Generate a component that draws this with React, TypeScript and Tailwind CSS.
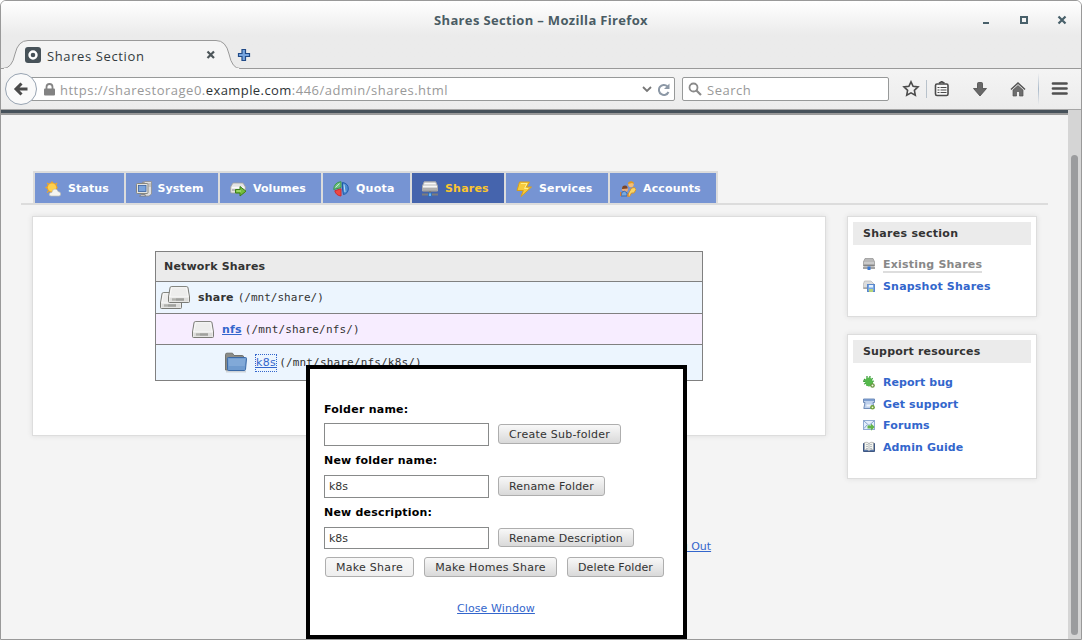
import React from "react";

type SvgProps = { children: React.ReactNode; w: number; h: number; className?: string };
const Svg = ({ children, w, h, className = "" }: SvgProps) => (
  <svg width={w} height={h} viewBox={`0 0 ${w} ${h}`} fill="none" className={"shrink-0 " + className}>
    {children}
  </svg>
);

const StatusIcon = () => (
  <Svg w={16} h={16}>
    <g stroke="#f6a81c" strokeWidth="1.4">
      <path d="M7 0.5V13M0.5 6.5H13M2.2 2L12 11.5M12 2L2.2 11.5" strokeDasharray="2 1" />
    </g>
    <circle cx="7" cy="6.5" r="4.6" fill="#fdd04e" stroke="#f3a31d" />
    <path d="M6 15Q4 15 4.200 13Q5 11.200 6.800 11.500Q7.500 8 10 8Q12.600 8 13 10.500Q15.600 10.500 15.700 13Q15.600 15 14 15Z" fill="#f4f4f0" stroke="#bdbdb2" strokeWidth=".7" />
  </Svg>
);
const SystemIcon = () => (
  <Svg w={16} h={16}>
    <path d="M6 1.500L9 .5H15.500V13L13 15H9V2Z" fill="#dedede" stroke="#8d8d8d" strokeWidth=".8" />
    <path d="M11 3H15M12.500 5H15" stroke="#999" strokeWidth=".8" />
    <rect x=".5" y="2.500" width="11.500" height="10" rx="1" fill="#e4e4e0" stroke="#87877f" />
    <rect x="2.500" y="4.500" width="7.500" height="6" fill="#79a3dc" stroke="#3b62a0" strokeWidth=".8" />
    <path d="M3.500 15Q5 12.800 8.500 13.500L9.500 15Z" fill="#eee" stroke="#777" strokeWidth=".8" />
  </Svg>
);
const VolumesIcon = () => (
  <Svg w={17} h={16}>
    <path d="M3 2H13L15.500 6V11Q15.500 12 14.500 12H1.600Q.6 12 .6 11V6Z" fill="#e3e3e3" stroke="#a0a0a0" strokeWidth=".8" />
    <path d="M2 6.500H14" stroke="#fafafa" strokeWidth="1.500" /><path d="M2 9H9" stroke="#8f8f8f" />
    <path d="M5.500 8.500H10V5.500L16 10.200L10 15V12H5.500Z" fill="#74bd3d" stroke="#397d19" />
    <path d="M6.500 10H11" stroke="#bce98a" />
  </Svg>
);
const QuotaIcon = () => (
  <Svg w={16} h={16}>
    <path d="M8 .7Q1 1.500 .7 8.500L8 6.500Z" fill="#74c47a" stroke="#3a9650" />
    <path d="M1.800 9.800L8 7.800V15Q3 14.500 1.800 9.800Z" fill="#ed4843" stroke="#d12b2e" />
    <path d="M9.500 1.500Q15.500 2.500 15.300 8Q15 12.500 10.500 13.500L9.500 8Z" fill="#4f8bd4" stroke="#1f5ba8" />
    <path d="M2.500 6.500L6.500 2.500M11 3.500L12 11" stroke="#bce1ed" />
  </Svg>
);
const SharesIcon = () => (
  <Svg w={16} h={16}>
    <path d="M2.200 .8H13.700L15.500 5V10H.5V5Z" fill="#d8d8d8" stroke="#aaa" />
    <path d="M2.500 2.500H13.500M1 5.500H15" stroke="#f7f7f7" />
    <path d="M1 8H15M1 10H15" stroke="#858585" />
    <path d="M8 10V14M0 13.500H16" stroke="#7c7c7c" strokeWidth="2" />
    <rect x="6.500" y="12" width="3" height="3.500" fill="#64b2ff" stroke="#2e69ae" strokeWidth=".8" />
  </Svg>
);
const ServicesIcon = () => (
  <Svg w={16} h={16}>
    <path d="M3.500 1H13.500L10.500 6H15.500L5 15.500L7.300 9.500H1Z" fill="#f6cb3d" stroke="#d99f19" />
    <path d="M5 2.500H11L8.500 7.500H12" stroke="#fff08a" />
  </Svg>
);
const AccountsIcon = () => (
  <Svg w={16} h={16}>
    <circle cx="11" cy="3.500" r="2.700" fill="#f4bd76" />
    <path d="M8 3Q8 .2 11 .2Q14 .2 14 3L12 2Z" fill="#e09a1e" />
    <path d="M7 15L11.500 7L14.500 6.500L16 8.500L14 12L11.500 12L9.500 15.500Z" fill="#f9d566" stroke="#d39430" />
    <circle cx="5" cy="8" r="3" fill="#e8a978" />
    <path d="M2 8Q2 4.600 5 4.600Q8 5 7.500 7.500Z" fill="#794428" />
    <path d="M1 15L2 11Q5 9 7 12V15Z" fill="#78a9df" stroke="#376bb0" />
    <path d="M.6 11V15M7 14H9" stroke="#de8239" strokeWidth="1.300" />
  </Svg>
);

const Drive = () => (
  <>
    <path d="M3.300 .6H18.700Q19.800 .6 20 1.800L21.500 11V15.500Q21.500 16.500 20.500 16.500H1.500Q.5 16.500 .5 15.500V11L2 1.800Q2.200 .6 3.300 .6Z" fill="#e9e9e7" stroke="#7a7b76" />
    <path d="M3.500 1.700H18.500L20.300 11H1.700Z" fill="#ededec" stroke="#fff" strokeWidth=".7" />
    <rect x="2" y="11.800" width="18" height="3.400" fill="#dcdcda" />
    <path d="M4 13.500H16" stroke="#b0b1ad" strokeWidth="2.400" />
    <path d="M8.500 13.500H16" stroke="#8f908c" strokeWidth="2.400" strokeDasharray="1 1" />
  </>
);
const DriveIcon = () => <Svg w={22} h={17}><Drive /></Svg>;
const DrivesIcon = () => (
  <Svg w={30} h={23}>
    <g transform="translate(0 6)"><Drive /></g>
    <g transform="translate(8 0)"><Drive /></g>
  </Svg>
);
const FolderIcon = () => (
  <Svg w={24} h={22}>
    <path d="M2 19.500H22" stroke="#aaa" strokeWidth="2" opacity=".45" />
    <path d="M1.500 18V2.500Q1.500 1.200 3 1.200H8.500L10 3.500H18.500Q19.500 3.500 19.500 5V18Z" fill="#8b8c88" stroke="#72736f" />
    <path d="M3.300 6.500Q3.300 5.500 4.500 5.500H21.500Q22.600 5.500 22.500 6.700L21.500 17.500Q21.300 18.500 20.300 18.500H4.500Q3.600 18.500 3.600 17.500Z" fill="#6f9bcf" stroke="#3a69a6" />
    <path d="M4.500 6.700H21.500L20.700 14H4.700Z" fill="#8db3de" opacity=".6" />
  </Svg>
);

const SmallShare = () => (
  <Svg w={12} h={12}>
    <path d="M2 .5H10L11.600 4V8H.4V4Z" fill="#b9b9b9" stroke="#999" strokeWidth=".8" />
    <path d="M1 5H11" stroke="#ddd" /><path d="M.5 7.500H11.500M0 10H12" stroke="#858585" strokeWidth="1.500" />
    <rect x="4.500" y="8.500" width="3" height="3.500" fill="#3b78d1" />
  </Svg>
);
const SmallSnapshot = () => (
  <Svg w={12} h={12}>
    <path d="M1.500 1H8L11 4V8.500H.4V4Z" fill="#ddd" stroke="#bbb" strokeWidth=".8" /><path d="M.5 8H6" stroke="#888" />
    <rect x="4.500" y="4.500" width="7" height="7" fill="#76a5e4" stroke="#5b88cb" />
    <path d="M6 5H10V7.500H6Z" fill="#e5f2ff" /><path d="M6 9H10V12H6Z" fill="#b7d47a" />
  </Svg>
);
const BugIcon = () => (
  <Svg w={12} h={12}>
    <path d="M4 0V10M7 0L6 9M9.500 2L5 10M0 5L10 7M1 3L9 10M1 8L11 5" stroke="#3c9e3b" strokeWidth="1.300" />
    <ellipse cx="6" cy="6" rx="3.800" ry="4.400" transform="rotate(-25 6 6)" fill="#55b94c" />
    <circle cx="9.500" cy="9.500" r="2.300" fill="#68943f" /><circle cx="9.500" cy="9.500" r="1" fill="#f2f9e9" />
  </Svg>
);
const SupportIcon = () => (
  <Svg w={12} h={12}>
    <path d="M.5 1H11.500V4.500H10L11 10.500H.8L2 4.500H.5Z" fill="#bfd1ec" stroke="#6583b2" strokeWidth=".9" />
    <path d="M1 2H11" stroke="#6f91c9" strokeWidth="1.600" /><path d="M3.500 7.500H8" stroke="#eef4fd" strokeWidth="2" />
    <circle cx="9.500" cy="9.300" r="2.300" fill="#6fa136" /><circle cx="9.500" cy="9.300" r=".9" fill="#eef9df" />
  </Svg>
);
const ForumIcon = () => (
  <Svg w={12} h={12}>
    <rect x=".5" y="1.500" width="11" height="9" fill="#e3eefb" stroke="#91acd3" />
    <path d="M1 2L6 6.500L11 2M1 9.500L4 6" stroke="#87a4cd" />
    <path d="M4.500 6.500H8V4.500L11.700 8L8 11.800V9.500H4.500Z" fill="#62b54a" />
  </Svg>
);
const GuideIcon = () => (
  <Svg w={12} h={12}>
    <path d="M.5 2.500V10.500H11.500V2.500Z" fill="#4770b1" stroke="#3f5680" />
    <path d="M1.500 1.500Q4.500 .5 6 2.500Q7.500 .5 10.500 1.500V9Q7.500 8 6 10Q4.500 8 1.500 9Z" fill="#f4f4ed" stroke="#999" strokeWidth=".6" />
    <path d="M6 2.500V10M3 3.500H5M7 3.500H9M3 5.500H5M7 5.500H9M3 7.500H5M7 7.500H9" stroke="#a9b1b8" strokeWidth=".8" />
  </Svg>
);

type TabProps = { icon: React.ReactNode; label: string; width: string; active?: boolean };
const Tab = ({ icon, label, width, active }: TabProps) => (
  <div className={`flex h-[30px] items-center pl-[10px] text-[11px] font-bold ${width} ${active ? "bg-[#4564ad] text-[#fcc62c]" : "bg-[#7694d3] text-white"}`}>
    <span className="mt-[2px] flex w-[23px]">{icon}</span><span className="pt-[2px]">{label}</span>
  </div>
);

const Push = ({ children, className }: { children: React.ReactNode; className: string }) => (
  <button className={`rounded-[3px] border border-[#aeaeae] bg-linear-to-b from-[#f8f8f8] pt-px text-[11px] leading-[17px] text-[#333] ${className}`}>{children}</button>
);
const Field = ({ value, className }: { value: string; className: string }) => (
  <input defaultValue={value} className={`w-[165px] border border-[#888a8a] bg-white px-1 text-[11px] text-[#333] outline-none ${className}`} />
);

const SideLink = ({ icon, label, spacing, current }: { icon: React.ReactNode; label: string; spacing: string; current?: boolean }) => (
  <div className="flex h-[21.700px] items-start gap-2 pl-[10px]">
    <span className="mt-[5px]">{icon}</span>
    <a className={`mt-[3px] h-[17px] border-b-2 text-[11px] leading-[17px] font-bold ${spacing} ${current ? "border-[#ddd] text-[#888]" : "border-transparent text-[#3366cc]"}`}>{label}</a>
  </div>
);

const Toolbar = () => (
  <div className="relative flex h-[41px] shrink-0 items-start border-b border-[#a5a5a5] bg-linear-to-b from-[#f4f4f4] to-[#ececec]">
    <div className="mt-2 ml-[21px] flex h-6 w-[653px] items-center rounded-[2px] border border-[#979999] bg-white pl-[21px]">
      <Svg w={11} h={13}>
        <path d="M2.500 6V4Q2.500 1 5.500 1Q8.500 1 8.500 4V6" stroke="#848484" strokeWidth="1.800" />
        <rect x="0" y="5.500" width="11" height="7" rx="1" fill="#828282" />
      </Svg>
      <span className="ml-[5px] whitespace-pre pt-[3px] font-['Open_Sans',sans-serif] text-[13px] tracking-[0.5px] text-[#999]">https://sharestorage0.<span className="tracking-[0.42px] text-[#2e3436]">example.com</span>:446/admin/shares.html</span>
      <Svg w={12} h={8} className="ml-auto"><path d="M2 2L6 6L10 2" stroke="#777" strokeWidth="1.800" /></Svg>
      <Svg w={13} h={13} className="mr-[3px] ml-[5px]"><path d="M10.500 9A5 5 0 1 1 9.300 3.200" stroke="#8c98a6" strokeWidth="2" /><path d="M11.500 .5V6H6Z" fill="#8c98a6" /></Svg>
    </div>
    <div className="mt-2 ml-[7px] flex h-6 w-[207px] items-center rounded-[2px] border border-[#979999] bg-white pl-[5px]">
      <Svg w={15} h={15}><circle cx="5.500" cy="5.500" r="4" stroke="#8a8a8a" strokeWidth="1.800" /><path d="M8.500 8.500L13 13" stroke="#8a8a8a" strokeWidth="2.200" /></Svg>
      <span className="ml-[4px] pt-[3px] font-['Open_Sans',sans-serif] text-[13px] tracking-[0.5px] text-[#999]">Search</span>
    </div>
    <Svg w={18} h={18} className="mt-[11px] ml-[13px]"><path d="M9 1.800L11.100 6.300L16 6.900L12.400 10.300L13.300 15.300L9 12.900L4.700 15.300L5.600 10.300L2 6.900L6.900 6.300Z" stroke="#4b4b4b" strokeWidth="1.600" /></Svg>
    <div className="mt-[11px] ml-[6px] h-[18px] w-px bg-[#b8c2cb]" />
    <Svg w={15} h={16} className="mt-[12px] ml-[7px]">
      <rect x="1.500" y="3" width="12.500" height="11.500" rx="1.500" fill="#fafafa" stroke="#4b4b4b" strokeWidth="1.600" />
      <path d="M5 2.200L7.750 .8L10.500 2.200" stroke="#4b4b4b" strokeWidth="1.800" />
      <path d="M3.500 6.500H5.500M6.500 6.500H12.500M3.500 9H5.500M6.500 9H12.500M3.500 11.500H5.500M6.500 11.500H12.500" stroke="#4b4b4b" strokeWidth="1.200" />
    </Svg>
    <Svg w={14} h={15} className="mt-[13px] ml-[24px]"><path d="M4.500 1.500Q4.500 .5 5.500 .5H8.500Q9.500 .5 9.500 1.500V6.500H13.500L7 14L.5 6.500H4.500Z" fill="#686868" stroke="#4a4a4a" strokeWidth=".8" /></Svg>
    <Svg w={16} h={16} className="mt-[12px] ml-[23px]"><path d="M1 8.500L8 2L15 8.500" stroke="#555" strokeWidth="1.600" /><path d="M3 9L8 4.500L13 9V15H9.500V10.500H6.500V15H3Z" fill="#6e6e6e" stroke="#555" strokeWidth=".7" /></Svg>
    <div className="mt-1 ml-[12px] h-[32px] w-px bg-linear-to-b from-transparent via-[#aabaca] to-transparent" />
    <Svg w={17} h={15} className="mt-[12px] ml-[12px]"><path d="M2 2.500H15.500M2 7.500H15.500M2 12.500H15.500" stroke="#505050" strokeWidth="2.700" strokeLinecap="round" /></Svg>
    <div className="absolute top-[4px] left-[4px] flex h-[32px] w-[32px] items-center justify-center rounded-full border border-[#98a4b2] bg-[#fafafa]">
      <Svg w={16} h={16}><path d="M14.500 8H3M8.500 2.500L3 8L8.500 13.500" stroke="#4a4a4a" strokeWidth="3" /></Svg>
    </div>
  </div>
);

export default function App() {
  return (
    <div className="flex h-[640px] w-[1082px] flex-col overflow-hidden rounded-t-[6px] border border-[#999] bg-[#f4f4f4] font-['DejaVu_Sans',sans-serif] text-[#333]">
      <div className="flex h-[68px] shrink-0 flex-col bg-linear-to-b from-white via-[#ebebeb] to-[#ebebeb]">
        <div className="relative h-[39px] font-['Open_Sans',sans-serif]">
          <div className="pt-[10px] text-center text-[13px] leading-[19px] font-bold tracking-[0.34px] text-[#4a5c64]">Shares Section – Mozilla Firefox</div>
          <Svg w={86} h={14} className="absolute top-[12px] right-[12px]">
            <path d="M0 10H6" stroke="#48606a" strokeWidth="2" />
            <rect x="38" y="4" width="6" height="6" stroke="#48606a" strokeWidth="2" />
            <path d="M75.500 3.500L82.500 10.500M82.500 3.500L75.500 10.500" stroke="#48606a" strokeWidth="2.200" />
          </Svg>
        </div>
        <div className="relative z-10 h-[29px]">
          <Svg w={1080} h={29} className="absolute top-0 left-0">
            <path d="M0 28.500H2Q11 28.500 14 14Q17 .5 27 .5H215Q225 .5 228 14Q231 28.500 239 28.500H1080" fill="#f4f4f4" stroke="#999" />
            <path d="M3 28.500H238" stroke="#f4f4f4" />
            <rect x="24" y="7" width="16" height="16" rx="3" fill="#475259" /><circle cx="32" cy="15" r="3.500" fill="#475259" stroke="#fff" strokeWidth="2.400" />
            <path d="M206.500 11.500L213 18M213 11.500L206.500 18" stroke="#4c5559" strokeWidth="2.200" />
            <path d="M241 13.500H237.500V16.500H241V20.500H244.500V16.500H248.500V13.500H244.500V9.500H241Z" fill="#77a5df" stroke="#204a87" strokeWidth="1.200" />
          </Svg>
          <span className="absolute top-[7px] left-[46px] font-['Open_Sans',sans-serif] text-[13px] leading-[19px] tracking-[0.62px] text-[#333b3e]">Shares Section</span>
        </div>
      </div>
      <Toolbar />
      <div className="flex min-h-0 flex-1">
        <main className="relative flex w-[1067px] flex-col border-t-3 border-[#46515a] shadow-[inset_0_2px_0_#999]">
          <nav className="mt-[58px] ml-5 h-[34px] w-[1027px] border-b-2 border-[#dcdcdc]">
            <div className="ml-3 flex h-[34px] w-[685px] gap-[2px] border-2 border-[#dcdcdc] bg-[#dcdcdc]">
              <Tab icon={<StatusIcon />} label="Status" width="w-[89px] tracking-[0.1px]" />
              <Tab icon={<SystemIcon />} label="System" width="w-[92px] -indent-[1.500px] tracking-[0.05px]" />
              <Tab icon={<VolumesIcon />} label="Volumes" width="w-[101px] tracking-[0.05px]" />
              <Tab icon={<QuotaIcon />} label="Quota" width="w-[87px] tracking-[0.25px]" />
              <Tab icon={<SharesIcon />} label="Shares" width="w-[92px] tracking-[0.2px]" active />
              <Tab icon={<ServicesIcon />} label="Services" width="w-[102px] tracking-[0.15px]" />
              <Tab icon={<AccountsIcon />} label="Accounts" width="w-[106px] tracking-[0.15px]" />
            </div>
          </nav>
          <div className="mt-[11px] ml-[31px] flex items-start gap-[21px]">
            <section className="h-[220px] w-[794px] border border-[#ddd] bg-white pt-[34px] pl-[122px] shadow-[0_0_5px_#ddd]">
              <div className="w-[548px] border border-[#808080] text-[11px]">
                <div className="h-[29px] bg-[#ebebeb] pl-2 leading-[29px] font-bold tracking-[0.18px]">Network Shares</div>
                <div className="flex h-8 items-center border-t border-[#808080] bg-[#ecf5fe] pl-1"><DrivesIcon /><b className="ml-2 pt-px tracking-[0.2px]">share</b><span className="ml-1 pt-px font-['DejaVu_Sans_Mono',monospace]">(/mnt/share/)</span></div>
                <div className="flex h-[31px] items-center border-t border-[#808080] bg-[#f7edff] pl-9"><DriveIcon /><b className="ml-2 pt-[2px] tracking-[0.15px] text-[#3366cc] underline">nfs</b><span className="ml-[3px] pt-[2px] font-['DejaVu_Sans_Mono',monospace] tracking-[0.15px]">(/mnt/share/nfs/)</span></div>
                <div className="flex h-9 items-center border-t border-[#808080] bg-[#ecf5fe] pl-[68px]"><FolderIcon /><span className="mt-px ml-[8px] tracking-[0.35px] text-[#3366cc] underline outline outline-dotted outline-[#3366cc]">k8s</span><span className="ml-[3px] pt-px font-['DejaVu_Sans_Mono',monospace] tracking-[0.17px]">(/mnt/share/nfs/k8s/)</span></div>
              </div>
            </section>
            <aside className="flex flex-col gap-[17px]">
              <section className="h-[101px] w-[190px] border border-[#ddd] bg-white p-[5px] shadow-[0_0_5px_#ddd]">
                <h2 className="mb-[8px] h-[23px] bg-[#ebebeb] pl-[10px] text-[11px] leading-[23px] font-bold tracking-[0.28px]">Shares section</h2>
                <SideLink icon={<SmallShare />} label="Existing Shares" spacing="tracking-[0.21px]" current />
                <SideLink icon={<SmallSnapshot />} label="Snapshot Shares" spacing="tracking-[0.2px]" />
              </section>
              <section className="h-[145px] w-[190px] border border-[#ddd] bg-white p-[5px] shadow-[0_0_5px_#ddd]">
                <h2 className="mb-[8px] h-[23px] bg-[#ebebeb] pl-[10px] text-[11px] leading-[23px] font-bold tracking-[0.18px]">Support resources</h2>
                <SideLink icon={<BugIcon />} label="Report bug" spacing="tracking-[0.05px]" />
                <SideLink icon={<SupportIcon />} label="Get support" spacing="tracking-[0.12px]" />
                <SideLink icon={<ForumIcon />} label="Forums" spacing="tracking-[0.15px]" />
                <SideLink icon={<GuideIcon />} label="Admin Guide" spacing="tracking-[0.1px]" />
              </section>
            </aside>
          </div>
          <a className="absolute top-[426px] left-[667px] text-[11px] text-[#3366cc] underline">Log Out</a>
          <div className="absolute top-[252px] left-[305px] flex h-[274px] w-[381px] flex-col border-4 border-black bg-white pt-[34px] pl-[14px] text-[11px] text-black">
            <label className="mb-[6px] h-[14px] leading-[14px] font-bold tracking-[0.24px]">Folder name:</label>
            <div className="mb-[8px] flex h-[23px] items-start gap-[9px]"><Field value="" className="h-[23px]" /><Push className="mt-px h-5 w-[123px] to-[#d9d9d9] tracking-[0.25px]">Create Sub-folder</Push></div>
            <label className="mb-[7px] h-[14px] leading-[14px] font-bold tracking-[0.22px]">New folder name:</label>
            <div className="mb-[8px] flex h-[23px] items-start gap-[9px]"><Field value="k8s" className="h-[23px]" /><Push className="mt-px h-5 w-[107px] to-[#d9d9d9] tracking-[0.18px]">Rename Folder</Push></div>
            <label className="mb-[7px] h-[14px] leading-[14px] font-bold tracking-[0.2px]">New description:</label>
            <div className="flex h-[22px] items-start gap-[9px]"><Field value="k8s" className="h-[22px]" /><Push className="mt-px h-[19px] w-[136px] to-[#d9d9d9] tracking-[0.15px]">Rename Description</Push></div>
            <div className="mt-2 ml-px flex gap-[10px]"><Push className="h-5 w-[89px] to-[#eeeeee] tracking-[0.28px]">Make Share</Push><Push className="h-5 w-[133px] to-[#d9d9d9] tracking-[0.3px]">Make Homes Share</Push><Push className="h-5 w-[97px] to-[#d9d9d9] tracking-[0.1px]">Delete Folder</Push></div>
            <a className="mt-[25px] w-[344px] text-center leading-[14px] tracking-[0.08px] text-[#3366cc] underline">Close Window</a>
          </div>
        </main>
        <div className="flex w-[13px] flex-col bg-[#d5d5d5] pt-[45px] pl-[3px]"><div className="h-[480px] w-[7px] rounded-full bg-[#9b9c9e]" /></div>
      </div>
    </div>
  );
}
